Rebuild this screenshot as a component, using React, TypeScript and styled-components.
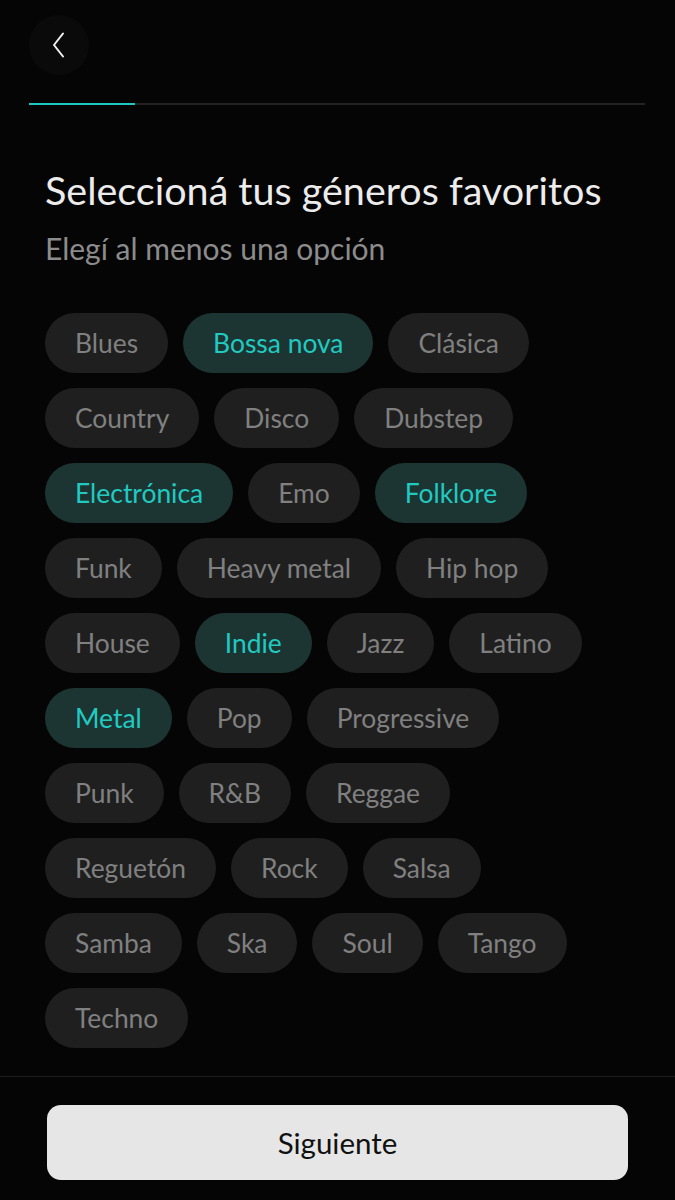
import React, { useState } from 'react';
import styled, { createGlobalStyle } from 'styled-components';

const GlobalStyle = createGlobalStyle`
  html, body {
    margin: 0;
    padding: 0;
    background: #050505;
  }
  body {
    font-family: Lato, 'Noto Sans', sans-serif;
  }
`;

const Screen = styled.div`
  height: 100vh;
  display: flex;
  flex-direction: column;
  background: #050505;
  overflow: hidden;
`;

const Header = styled.div`
  padding: 15px 30px 0 29px;
`;

const BackButton = styled.button`
  width: 60px;
  height: 60px;
  border-radius: 50%;
  border: none;
  background: #0a0a0a;
  display: flex;
  align-items: center;
  justify-content: center;
  padding: 0;
  cursor: pointer;
`;

const Progress = styled.div`
  margin-top: 28px;
  height: 2px;
  background: #222222;
`;

const ProgressFill = styled.div`
  height: 100%;
  background: #1fc8c0;
`;

const Content = styled.main`
  flex: 1;
  padding: 0 45px;
`;

const Title = styled.h1`
  margin: 61px 0 0;
  font-size: 39.5px;
  line-height: 1.2;
  font-weight: 400;
  color: #ececec;
`;

const Subtitle = styled.p`
  margin: 17px 0 0;
  font-size: 30px;
  line-height: 1.2;
  color: #8c8c8c;
`;

const ChipList = styled.div`
  display: flex;
  flex-wrap: wrap;
  gap: 15px 15px;
  margin-top: 47px;
`;

const Chip = styled.button<{ $active: boolean }>`
  height: 60px;
  padding: 0 30px;
  border: none;
  border-radius: 30px;
  font-family: inherit;
  font-size: 26.4px;
  background: ${(p) => (p.$active ? '#1c3533' : '#1f1f1f')};
  color: ${(p) => (p.$active ? '#22c9c0' : '#808080')};
  cursor: pointer;
`;

const Footer = styled.footer`
  border-top: 1px solid #1d1d1d;
  padding: 28px 47px 20px;
`;

const NextButton = styled.button`
  width: 100%;
  height: 75px;
  border: none;
  border-radius: 14px;
  background: #e6e6e6;
  color: #111111;
  font-family: inherit;
  font-size: 29.5px;
  cursor: pointer;
`;

const genres = [
  'Blues', 'Bossa nova', 'Clásica', 'Country', 'Disco', 'Dubstep',
  'Electrónica', 'Emo', 'Folklore', 'Funk', 'Heavy metal', 'Hip hop',
  'House', 'Indie', 'Jazz', 'Latino', 'Metal', 'Pop', 'Progressive',
  'Punk', 'R&B', 'Reggae', 'Reguetón', 'Rock', 'Salsa', 'Samba', 'Ska',
  'Soul', 'Tango', 'Techno',
];

const ChevronLeft = () => (
  <svg width="14" height="26" viewBox="0 0 14 26" fill="none">
    <path d="M11 1.5 L2 13 L11 24.5" stroke="#f2f2f2" strokeWidth="2" strokeLinecap="round" strokeLinejoin="round" />
  </svg>
);

const App = () => {
  const [selected, setSelected] = useState<string[]>([
    'Bossa nova', 'Electrónica', 'Folklore', 'Indie', 'Metal',
  ]);

  const toggle = (g: string) =>
    setSelected((s) => (s.includes(g) ? s.filter((x) => x !== g) : [...s, g]));

  // first step of the onboarding flow
  const step = 0.172;

  return (
    <>
      <GlobalStyle />
      <Screen>
        <Header>
          <BackButton aria-label="Volver">
            <ChevronLeft />
          </BackButton>
          <Progress>
            <ProgressFill style={{ width: `${step * 100}%` }} />
          </Progress>
        </Header>
        <Content>
          <Title>Seleccioná tus géneros favoritos</Title>
          <Subtitle>Elegí al menos una opción</Subtitle>
          <ChipList>
            {genres.map((g) => (
              <Chip key={g} $active={selected.includes(g)} onClick={() => toggle(g)}>
                {g}
              </Chip>
            ))}
          </ChipList>
        </Content>
        <Footer>
          <NextButton>Siguiente</NextButton>
        </Footer>
      </Screen>
    </>
  );
};

export default App;
